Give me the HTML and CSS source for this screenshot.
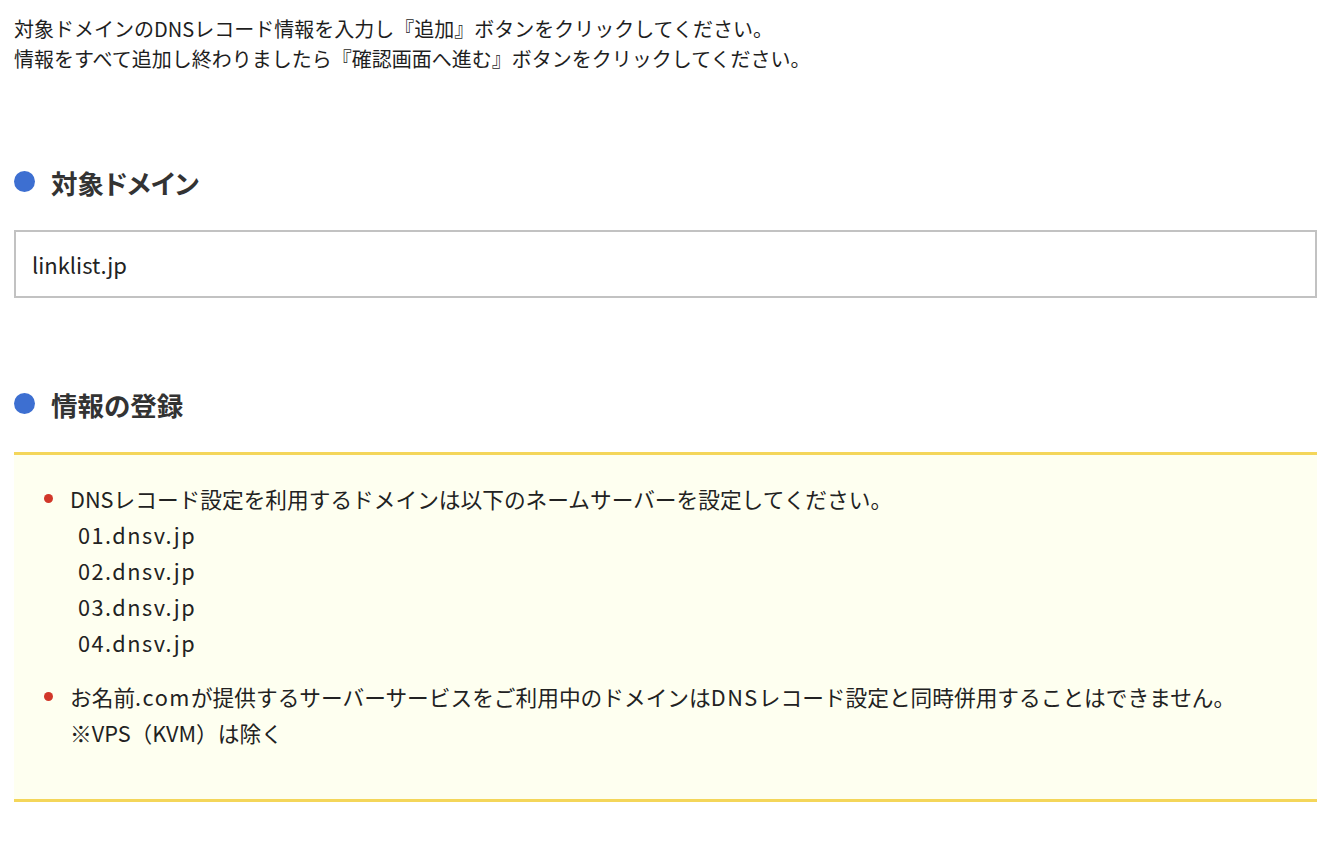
FILE: index.html
```html
<!DOCTYPE html>
<html lang="ja">
<head>
<meta charset="utf-8">
<title>DNSレコード設定</title>
<link rel="stylesheet" href="styles.css">
</head>
<body>
<div class="page">
  <p class="intro">対象ドメインのDNSレコード情報を入力し『追加』ボタンをクリックしてください。<br>情報をすべて追加し終わりましたら『確認画面へ進む』ボタンをクリックしてください。</p>

  <h2 class="section-title">対象ドメイン</h2>
  <div class="domain-box">linklist.jp</div>

  <h2 class="section-title">情報の登録</h2>
  <div class="notice">
    <ul class="notice-list">
      <li>DNSレコード設定を利用するドメインは以下のネームサーバーを設定してください。
        <div class="ns">01.dnsv.jp</div>
        <div class="ns">02.dnsv.jp</div>
        <div class="ns">03.dnsv.jp</div>
        <div class="ns">04.dnsv.jp</div>
      </li>
      <li>お名前<span class="latin">.com</span>が提供するサーバーサービスをご利用中のドメインは<span class="latin">DNS</span>レコード設定と同時併用することはできません。<br>※VPS（KVM）は除く</li>
    </ul>
  </div>
</div>
</body>
</html>
```

FILE: styles.css
```css
* { box-sizing: border-box; }
html, body { margin: 0; padding: 0; background: #fff; }
body {
  font-family: "Noto Sans CJK JP", "Noto Sans", sans-serif;
  color: #333;
}
.page {
  width: 1303px;
  margin-left: 14px;
  padding-top: 14px;
}
.intro {
  margin: 0;
  font-size: 20px;
  line-height: 30px;
  color: #1e1e1e;
}
.section-title {
  margin: 91px 0 0;
  display: flex;
  align-items: center;
  gap: 16px;
  font-size: 26.5px;
  line-height: 36px;
  font-weight: bold;
  color: #333;
  font-feature-settings: "palt";
}
.section-title::before {
  content: "";
  width: 21px;
  height: 21px;
  border-radius: 50%;
  background: #3d6fd1;
  flex: none;
  margin-top: -4px;
}
.domain-box + .section-title { margin-top: 89px; }
.domain-box {
  margin-top: 29px;
  height: 68px;
  border: 2px solid #c2c2c2;
  padding: 0 16px;
  display: flex;
  align-items: center;
  font-size: 22px;
  color: #222;
}
.notice {
  margin-top: 29px;
  background: #fefff0;
  border-top: 3px solid #f4d65a;
  border-bottom: 3px solid #f4d65a;
  padding: 26px 0 48px 0;
}
.notice-list {
  list-style: none;
  margin: 0;
  padding: 0 0 0 56px;
  font-size: 21.7px;
  line-height: 36px;
  color: #222;
}
.notice-list li {
  position: relative;
}
.notice-list li + li { margin-top: 18px; }
.notice-list li::before {
  content: "";
  position: absolute;
  left: -26px;
  top: 13px;
  width: 9px;
  height: 9px;
  border-radius: 50%;
  background: #d1372a;
}
.ns {
  padding-left: 8px;
  letter-spacing: 1.5px;
}
.latin { letter-spacing: 1.5px; }
```
